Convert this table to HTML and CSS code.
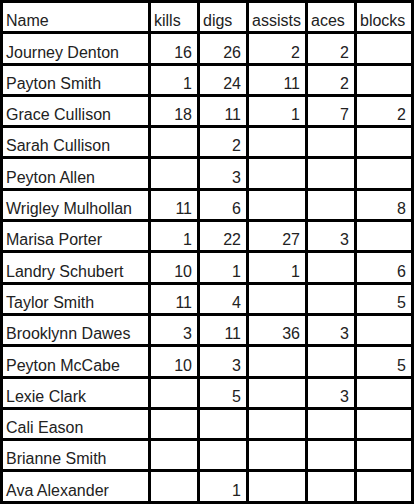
FILE: index.html
```html
<!DOCTYPE html>
<html>
<head>
<meta charset="utf-8">
<link rel="stylesheet" href="styles.css">
</head>
<body>
<table class="stats">
<colgroup>
<col class="c-name"><col class="c-kills"><col class="c-digs"><col class="c-assists"><col class="c-aces"><col class="c-blocks">
</colgroup>
<thead>
<tr><th>Name</th><th>kills</th><th>digs</th><th>assists</th><th>aces</th><th>blocks</th></tr>
</thead>
<tbody>
<tr><td>Journey Denton</td><td class="n">16</td><td class="n">26</td><td class="n">2</td><td class="n">2</td><td class="n"></td></tr>
<tr><td>Payton Smith</td><td class="n">1</td><td class="n">24</td><td class="n">11</td><td class="n">2</td><td class="n"></td></tr>
<tr><td>Grace Cullison</td><td class="n">18</td><td class="n">11</td><td class="n">1</td><td class="n">7</td><td class="n">2</td></tr>
<tr><td>Sarah Cullison</td><td class="n"></td><td class="n">2</td><td class="n"></td><td class="n"></td><td class="n"></td></tr>
<tr><td>Peyton Allen</td><td class="n"></td><td class="n">3</td><td class="n"></td><td class="n"></td><td class="n"></td></tr>
<tr><td>Wrigley Mulhollan</td><td class="n">11</td><td class="n">6</td><td class="n"></td><td class="n"></td><td class="n">8</td></tr>
<tr><td>Marisa Porter</td><td class="n">1</td><td class="n">22</td><td class="n">27</td><td class="n">3</td><td class="n"></td></tr>
<tr><td>Landry Schubert</td><td class="n">10</td><td class="n">1</td><td class="n">1</td><td class="n"></td><td class="n">6</td></tr>
<tr><td>Taylor Smith</td><td class="n">11</td><td class="n">4</td><td class="n"></td><td class="n"></td><td class="n">5</td></tr>
<tr><td>Brooklynn Dawes</td><td class="n">3</td><td class="n">11</td><td class="n">36</td><td class="n">3</td><td class="n"></td></tr>
<tr><td>Peyton McCabe</td><td class="n">10</td><td class="n">3</td><td class="n"></td><td class="n"></td><td class="n">5</td></tr>
<tr><td>Lexie Clark</td><td class="n"></td><td class="n">5</td><td class="n"></td><td class="n">3</td><td class="n"></td></tr>
<tr><td>Cali Eason</td><td class="n"></td><td class="n"></td><td class="n"></td><td class="n"></td><td class="n"></td></tr>
<tr><td>Brianne Smith</td><td class="n"></td><td class="n"></td><td class="n"></td><td class="n"></td><td class="n"></td></tr>
<tr><td>Ava Alexander</td><td class="n"></td><td class="n">1</td><td class="n"></td><td class="n"></td><td class="n"></td></tr>
</tbody>
</table>
</body>
</html>
```
FILE: styles.css
```css
html, body {
  margin: 0;
  padding: 0;
  background: #fff;
}
.stats {
  table-layout: fixed;
  width: 414px;
  border-collapse: separate;
  border-spacing: 0;
  border-left: 3px solid #000;
  border-top: 3px solid #000;
  font-family: "Liberation Sans", Arial, sans-serif;
  font-size: 16px;
  color: #222;
}
.c-name { width: 148px; }
.c-kills { width: 49px; }
.c-digs { width: 49px; }
.c-assists { width: 59px; }
.c-aces { width: 49px; }
.c-blocks { width: 57px; }
.stats th,
.stats td {
  border-right: 3px solid #000;
  border-bottom: 3px solid #000;
  padding: 9.3px 4px 1px 3px;
  line-height: 18px;
  vertical-align: bottom;
  text-align: left;
  font-weight: normal;
  white-space: nowrap;
  overflow: hidden;
}
.stats td.n {
  text-align: right;
  padding-right: 5px;
}
```
